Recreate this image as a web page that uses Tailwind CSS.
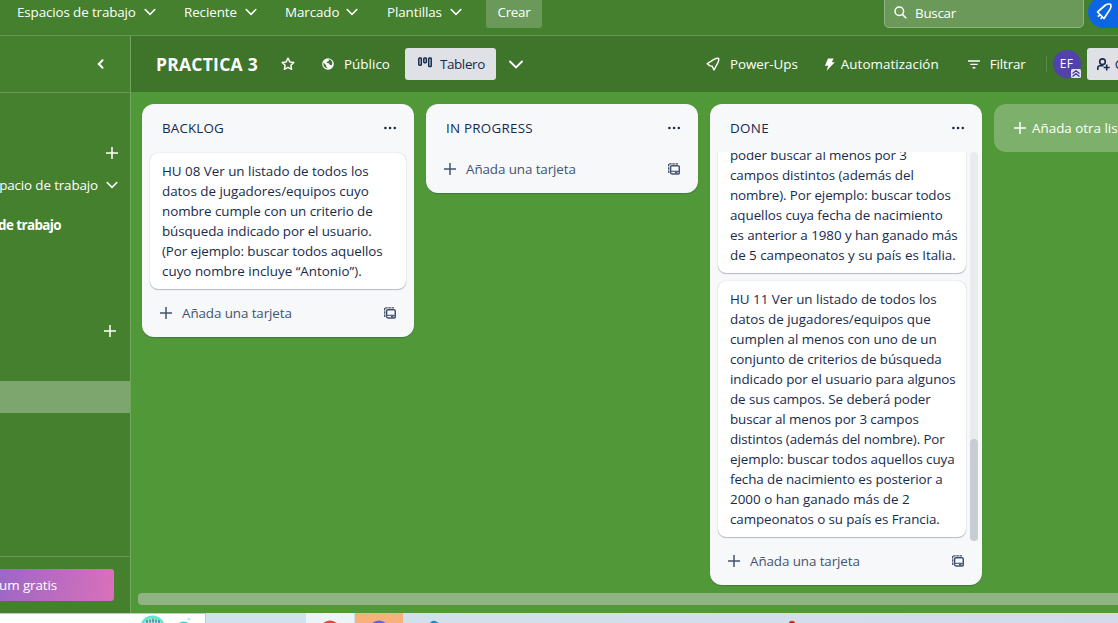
<!DOCTYPE html>
<html lang="es">
<head>
<meta charset="utf-8">
<title>PRACTICA 3</title>
<script src="https://cdn.jsdelivr.net/npm/@tailwindcss/browser@4"></script>
</head>
<body class="w-[1118px] h-[623px] overflow-hidden bg-[#519839] font-['Open_Sans','Noto_Sans',sans-serif] text-[13.4px] leading-5 text-[#172b4d] [&_svg]:shrink-0 [&_span]:shrink-0">
<svg class="hidden">
  <symbol id="chev" viewBox="0 0 12 8"><path d="M1.2 1.5 6 6.3l4.8-4.8" fill="none" stroke="currentColor" stroke-width="1.6" stroke-linecap="round"/></symbol>
  <symbol id="plus" viewBox="0 0 12 12"><path d="M6 0v12M0 6h12" stroke="currentColor" stroke-width="1.5"/></symbol>
  <symbol id="dots" viewBox="0 0 12 4"><g fill="currentColor"><circle cx="1.4" cy="2" r="1.3"/><circle cx="6.1" cy="2" r="1.3"/><circle cx="10.8" cy="2" r="1.3"/></g></symbol>
  <symbol id="tpl" viewBox="0 0 12 12"><path d="M.7 10V.8H10" fill="none" stroke="currentColor" stroke-width="1.3" stroke-dasharray="2.6 .6"/><rect x="2.600" y="2.700" width="8.700" height="8.300" rx="1.400" fill="none" stroke="currentColor" stroke-width="1.500"/><path d="M3 8.300h8" stroke="currentColor" stroke-width="1.100"/><path d="M7 8.800h2.500v1.500H7z" fill="currentColor"/></symbol>
</svg>
<div class="flex flex-col h-full">
  <nav class="flex h-9 shrink-0 bg-[#45802f] border-b border-[#659551] text-white font-medium">
    <div class="flex w-[884px] shrink-0 pt-[2px] pl-[17px] whitespace-nowrap">
      <div class="flex w-[167px] shrink-0"><span data-w="119">Espacios de trabajo</span><svg class="ml-[8px] mt-[6px] w-3 h-2"><use href="#chev"/></svg></div>
      <div class="flex w-[101px] shrink-0"><span data-w="53">Reciente</span><svg class="ml-[8px] mt-[6px] w-3 h-2"><use href="#chev"/></svg></div>
      <div class="flex w-[102px] shrink-0"><span data-w="54.5">Marcado</span><svg class="ml-[7px] mt-[6px] w-3 h-2"><use href="#chev"/></svg></div>
      <div class="flex w-[99px] shrink-0"><span data-w="55">Plantillas</span><svg class="ml-[8px] mt-[6px] w-3 h-2"><use href="#chev"/></svg></div>
      <div class="w-14 h-8 shrink-0 -mt-[6px] pt-[6px] pl-[11.5px] rounded-[3px] bg-[#6a995a]"><span data-w="33">Crear</span></div>
    </div>
    <div class="flex w-[200px] h-[33px] shrink-0 -mt-[5px] pt-[7px] pl-[9px] border border-[#8fb282] rounded-[5px] bg-[#6a995a]">
      <svg class="w-[13px] h-[13px] mt-[3px] mr-[8px]" viewBox="0 0 13 13" fill="none" stroke="white" stroke-width="1.5"><circle cx="5.3" cy="5.3" r="4.3"/><path d="m8.4 8.4 3.9 3.9"/></svg>
      <span data-w="41">Buscar</span>
    </div>
    <div class="shrink-0 w-[30px] h-8 ml-[4px] -mt-1 rounded-l-full bg-[#0c66e4]">
      <svg class="w-8 h-8" viewBox="0 0 32 32" fill="none" stroke="white" stroke-width="1.7" stroke-linejoin="round"><path d="M9.500 16 17.500 9q2.500-1.500 5.200-.8.800 2.500-.7 5.200L16 22.500Z"/><path d="m12.300 18.500-2.500 2.200m4.700 0-1.800 2.300"/></svg>
    </div>
  </nav>

  <div class="flex h-[577px] shrink-0">
    <aside class="flex flex-col w-[131px] shrink-0 bg-[#45802f] border-r border-[#6fa85c] text-white whitespace-nowrap overflow-hidden">
      <div class="flex h-[57px] shrink-0 border-b border-[#6a9957] items-center justify-end pr-[26px]">
        <svg class="w-[7px] h-[10px]" viewBox="0 0 7 10"><path d="M5.5 1.2 1.8 5l3.7 3.8" fill="none" stroke="white" stroke-width="2" stroke-linecap="round"/></svg>
      </div>
      <div class="flex justify-end pt-[54px] pr-3"><svg class="w-3 h-3"><use href="#plus"/></svg></div>
      <div class="flex justify-end pt-[16px] pr-3 font-medium"><span data-w="99">pacio de trabajo</span><svg class="ml-[8px] mt-[6px] w-3 h-2"><use href="#chev"/></svg></div>
      <div class="flex justify-end pt-[20px] pr-[69px] font-bold"><span data-w="63">de trabajo</span></div>
      <div class="flex justify-end pt-[90px] pr-[14px]"><svg class="w-3 h-3"><use href="#plus"/></svg></div>
      <div class="h-8 mt-11 bg-[#7da56e]"></div>
      <div class="mt-auto h-[57px] pt-3 border-t border-[#6a9957]">
        <div class="flex justify-end items-center w-[114px] h-8 pr-[57px] rounded-r-[3px] bg-linear-[100deg] from-[#9b67c6] to-[#da70ba] font-medium"><span data-w="58">um gratis</span></div>
      </div>
    </aside>

    <main class="flex flex-col w-[987px] overflow-hidden">
      <header class="flex items-center h-14 shrink-0 bg-[#3f752b] text-white font-medium whitespace-nowrap">
        <div class="w-[125px] shrink-0 pl-[25px] text-[17.5px] font-bold"><span data-w="102">PRACTICA 3</span></div>
        <svg class="w-[14px] h-[14px] ml-[25px]" viewBox="0 0 14 14"><path d="m7 1.2 1.8 3.7 4 .6-2.9 2.8.7 4L7 10.4l-3.600 1.900.7-4L1.200 5.500l4-.6Z" fill="none" stroke="white" stroke-width="1.500" stroke-linejoin="round"/></svg>
        <svg class="w-3 h-3 ml-[27px] mr-[10px]" viewBox="0 0 12 12"><circle cx="6" cy="6" r="5.800" fill="white"/><path d="M1.500 4.600 4.300 7.500v1.300l1.600 1.600Q2 10.200 1.400 6.500ZM6.300 1.400l.8 1.300-1.800 1-1 1.400 2.500.2 1 1.400 1.700.7.9-2Q10.400 2.500 8 1.500Z" fill="#3f752b"/></svg>
        <span data-w="46">Público</span>
        <div class="flex items-center w-[91px] h-8 shrink-0 ml-[15px] pl-[13px] rounded-[3px] bg-[#dfe1e6] text-[#172b4d] font-normal">
          <svg class="w-[14px] h-[11px] mr-[8px] -mt-[3px]" viewBox="0 0 14 11" fill="none" stroke="#172b4d" stroke-width="1.500"><rect x=".8" y="1" width="2.500" height="7.200" rx=".7"/><rect x="5.800" y="1" width="2.500" height="4.800" rx=".7"/><rect x="10.700" y="1" width="2.500" height="8.600" rx=".7"/></svg>
          <span data-w="45">Tablero</span>
        </div>
        <svg class="w-[14px] h-[9px] ml-[13px]" viewBox="0 0 14 9"><path d="M1 1.500 7 7.500l6-6" fill="none" stroke="white" stroke-width="1.900" stroke-linecap="round"/></svg>
        <svg class="w-[14px] h-[14px] ml-[183px] mr-[10px]" viewBox="0 0 14 14" fill="none" stroke="white" stroke-width="1.400" stroke-linejoin="round"><path d="m1.200 6.700 7.300-4.500q2.200-1.200 4.200-.8.300 2.300-.8 4.200L8 13l-1.800-3.800-2.100-.3Z"/></svg>
        <span data-w="68">Power-Ups</span>
        <svg class="w-3 h-[13px] ml-[26px] mr-[5px]" viewBox="0 0 12 13"><path d="M4 .5h5.600L7.800 4.200h3L2.600 12.800l1.600-5H.9Z" fill="white"/></svg>
        <span data-w="98">Automatización</span>
        <svg class="w-3 h-[9px] ml-[29px] mr-[10px]" viewBox="0 0 12 9" stroke="white" stroke-width="1.400"><path d="M0 1h12M2.300 4.400h7.400M4.600 7.800h2.800"/></svg>
        <span data-w="36">Filtrar</span>
        <div class="w-px h-4 shrink-0 ml-[20px] bg-[#5b8749]"></div>
        <div class="relative shrink-0 w-7 h-7 ml-[6px] rounded-full bg-[#5243aa] text-[12px] leading-7 pl-[7px]"><span data-w="14">EF</span>
          <svg class="absolute left-[18px] top-[18.500px] w-[10px] h-[9px]" viewBox="0 0 10 9"><rect width="10" height="9" rx="1.500" fill="#dfe1f2"/><path d="M1.500 4.500 5 1.800l3.500 2.700M1.500 7.500 5 4.800l3.500 2.700" fill="none" stroke="#403294" stroke-width="1.200"/></svg>
        </div>
        <div class="flex items-center shrink-0 w-[31px] h-8 ml-[6px] pl-[10px] rounded-l-[3px] bg-[#dfe1e6] text-[#172b4d] font-normal overflow-hidden">
          <svg class="w-[13px] h-[13px] mr-[5px]" viewBox="0 0 13 13" fill="none" stroke="#172b4d" stroke-width="1.600"><circle cx="5.500" cy="3.700" r="2.800"/><path d="M.8 12V9.800Q1 7.800 3 7.800h3.500M9.700 6.500v6M6.700 9.500h6"/></svg>
          <span>C</span>
        </div>
      </header>

      <section class="flex items-start h-[501px] shrink-0 pt-3 pl-[11px] gap-3 whitespace-nowrap">
        <div class="w-[272px] h-[233px] shrink-0 rounded-xl bg-[#f6f8fa] shadow-[0_1px_1px_#091e4240]">
          <div class="flex justify-between items-center h-12 mb-px pl-5 pr-[18px] font-medium"><span data-w="62">BACKLOG</span><svg class="w-3 h-1"><use href="#dots"/></svg></div>
          <div class="mx-2 px-3 py-2 rounded-lg bg-white shadow-[0_1px_1px_#091e4240,0_0_1px_#091e424f]">
            <p><span data-w="207">HU 08 Ver un listado de todos los</span></p>
            <p><span data-w="207">datos de jugadores/equipos cuyo</span></p>
            <p><span data-w="211">nombre cumple con un criterio de</span></p>
            <p><span data-w="210">búsqueda indicado por el usuario.</span></p>
            <p><span data-w="221">(Por ejemplo: buscar todos aquellos</span></p>
            <p><span data-w="200">cuyo nombre incluye “Antonio”).</span></p>
          </div>
          <div class="flex items-center mt-2 h-8 pl-[18px] pr-[18px] text-[#44546f]"><svg class="w-3 h-3 mr-[10px]"><use href="#plus"/></svg><span data-w="110">Añada una tarjeta</span><svg class="ml-auto w-3 h-3"><use href="#tpl"/></svg></div>
        </div>

        <div class="w-[272px] h-[89px] shrink-0 rounded-xl bg-[#f6f8fa] shadow-[0_1px_1px_#091e4240]">
          <div class="flex justify-between items-center h-12 mb-px pl-5 pr-[18px] font-medium"><span data-w="87">IN PROGRESS</span><svg class="w-3 h-1"><use href="#dots"/></svg></div>
          <div class="flex items-center h-8 pl-[18px] pr-[18px] text-[#44546f]"><svg class="w-3 h-3 mr-[10px]"><use href="#plus"/></svg><span data-w="110">Añada una tarjeta</span><svg class="ml-auto w-3 h-3"><use href="#tpl"/></svg></div>
        </div>

        <div class="w-[272px] h-[481px] shrink-0 rounded-xl bg-[#f6f8fa] shadow-[0_1px_1px_#091e4240]">
          <div class="flex justify-between items-center h-12 pl-5 pr-[18px] font-medium"><span data-w="39">DONE</span><svg class="w-3 h-1"><use href="#dots"/></svg></div>
          <div class="flex h-[389px] pl-[7px] pr-1 overflow-hidden">
            <div class="flex flex-col justify-end gap-2 w-[253px] h-full pl-px pr-1 pb-1 overflow-hidden">
              <div class="shrink-0 px-3 py-2 rounded-lg bg-white shadow-[0_1px_1px_#091e4240,0_0_1px_#091e424f]">
                <p><span data-w="177">poder buscar al menos por 3</span></p>
                <p><span data-w="184">campos distintos (además del</span></p>
                <p><span data-w="221">nombre). Por ejemplo: buscar todos</span></p>
                <p><span data-w="213">aquellos cuya fecha de nacimiento</span></p>
                <p><span data-w="228">es anterior a 1980 y han ganado más</span></p>
                <p><span data-w="226">de 5 campeonatos y su país es Italia.</span></p>
              </div>
              <div class="shrink-0 px-3 py-2 rounded-lg bg-white shadow-[0_1px_1px_#091e4240,0_0_1px_#091e424f]">
                <p><span data-w="207">HU 11 Ver un listado de todos los</span></p>
                <p><span data-w="201">datos de jugadores/equipos que</span></p>
                <p><span data-w="207">cumplen al menos con uno de un</span></p>
                <p><span data-w="212">conjunto de criterios de búsqueda</span></p>
                <p><span data-w="226">indicado por el usuario para algunos</span></p>
                <p><span data-w="201">de sus campos. Se deberá poder</span></p>
                <p><span data-w="189">buscar al menos por 3 campos</span></p>
                <p><span data-w="215">distintos (además del nombre). Por</span></p>
                <p><span data-w="225">ejemplo: buscar todos aquellos cuya</span></p>
                <p><span data-w="213">fecha de nacimiento es posterior a</span></p>
                <p><span data-w="180">2000 o han ganado más de 2</span></p>
                <p><span data-w="210">campeonatos o su país es Francia.</span></p>
              </div>
            </div>
            <div class="flex flex-col justify-end w-2 h-full rounded bg-[#e9ebef]"><div class="h-[102px] rounded bg-[#c8ccd5]"></div></div>
          </div>
          <div class="flex items-center mt-1 h-8 pl-[18px] pr-[18px] text-[#44546f]"><svg class="w-3 h-3 mr-[10px]"><use href="#plus"/></svg><span data-w="110">Añada una tarjeta</span><svg class="ml-auto w-3 h-3"><use href="#tpl"/></svg></div>
        </div>

        <div class="flex items-center w-[124px] h-12 shrink-0 pl-5 rounded-l-xl bg-[#7db16b] text-white font-medium overflow-hidden"><svg class="w-3 h-3 mr-[6px]"><use href="#plus"/></svg><span data-w="98">Añada otra lista</span></div>
      </section>
      <div class="h-3 shrink-0 ml-[7px] rounded-l bg-[#90b383]"></div>
    </main>
  </div>

  <footer class="flex h-[10px] shrink-0 overflow-hidden bg-linear-to-r from-[#cfe5ed] to-[#d4daea]">
    <div class="flex w-[206px] shrink-0 bg-white border-t border-r border-[#c4c8c4]">
      <svg class="w-[205px] h-[10px]" viewBox="0 0 205 10"><circle cx="152.500" cy="14" r="12.500" fill="#5de8cf"/><circle cx="152.500" cy="14" r="10" fill="#a9e9c4"/><path d="M147 6v3M150 5.500v3M153 4.500v4M156 5.500v3M159 6v3" stroke="#4b86c6" stroke-width="1.600"/><path d="M177 10q7-5 13 0Z" fill="#35d5d5"/><circle cx="189" cy="5" r="1.600" fill="#c3ecf8"/></svg>
    </div>
    <div class="w-[100px] shrink-0"></div>
    <svg class="w-12 h-[10px] bg-[#edf4f8]" viewBox="0 0 48 10"><circle cx="24" cy="18" r="10.500" fill="#ea4335"/></svg>
    <svg class="w-12 h-[10px] ml-px bg-[#f7b27c]" viewBox="0 0 48 10"><circle cx="24" cy="18" r="10.500" fill="#5965f0"/></svg>
    <svg class="w-[60px] h-[10px]" viewBox="0 0 60 10"><path d="M27 10q3-4 7-1l2 1Z" fill="#168ccd"/></svg>
    <svg class="w-[60px] h-[10px] ml-[299px]" viewBox="0 0 60 10"><circle cx="30" cy="11" r="3.200" fill="#d52b1e"/></svg>
  </footer>
</div>
<script>
  function fitLabels() {
    document.querySelectorAll('[data-w]').forEach(function (el) {
      el.style.display = 'inline-block';
      el.style.letterSpacing = '0.01px';
      var own = el.getBoundingClientRect().width;
      el.style.letterSpacing = ((parseFloat(el.dataset.w) - own) / el.textContent.length) + 'px';
    });
  }
  fitLabels();
  window.addEventListener('load', function () {
    fitLabels();
    requestAnimationFrame(fitLabels);
    setTimeout(fitLabels, 60);
  });
</script>
</body>
</html>
